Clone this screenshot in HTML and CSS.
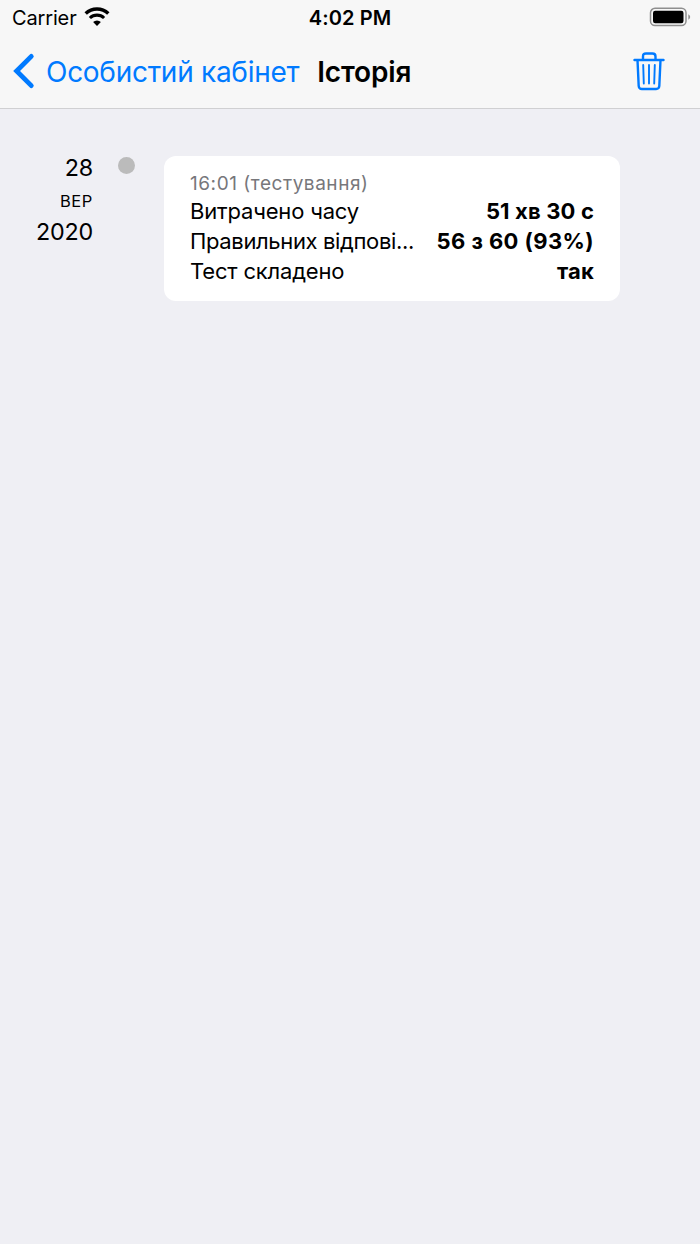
FILE: index.html
```html
<!DOCTYPE html>
<html lang="uk">
<head>
<meta charset="UTF-8">
<meta name="viewport" content="width=device-width, initial-scale=1">
<title>Історія</title>
<link rel="stylesheet" href="styles.css">
</head>
<body>
<div class="app">

<!-- Top bars -->
<header class="top">
<div class="status">
<div class="carrier">
<span class="carrier-name">Carrier</span>
<svg class="wifi" viewBox="0 0 26 20" width="26" height="20">
<path d="M1.700 6.500a16.500 16.500 0 0 1 22.600 0" fill="none" stroke="#000" stroke-width="3.500"/>
<path d="M5.900 11a10.300 10.300 0 0 1 14.200 0" fill="none" stroke="#000" stroke-width="3.100"/>
<path d="M13 19l-3.900-3.900a5.600 5.600 0 0 1 7.800 0z"/>
</svg>
</div>
<div class="time">4:02 PM</div>
<div class="power">
<svg class="battery" viewBox="0 0 42 20" width="42" height="20">
<rect x="1.500" y="1.300" width="35.500" height="17.200" rx="4.500" fill="none" stroke="#8f8f8f" stroke-width="1.500"/>
<rect x="4" y="3.800" width="30.500" height="12.400" rx="2.200"/>
<path d="M39.300 7.200q1.900 1 1.900 2.800t-1.900 2.800z" fill="#8f8f8f"/>
</svg>
</div>
</div>
<nav class="nav">
<a class="back" href="#">
<svg class="chevron" viewBox="0 0 22 36" width="22" height="36">
<path d="M18.300 3.400L3.600 18l14.700 14.600" fill="none" stroke="#007aff" stroke-width="4.800" stroke-linecap="round"/>
</svg>
<span class="back-text">Особистий кабінет</span>
</a>
<h1 class="title">Історія</h1>
<button class="trash" aria-label="Видалити">
<svg viewBox="0 0 32 40" width="32" height="40" fill="none" stroke="#007aff" stroke-width="2.400" stroke-linecap="round" stroke-linejoin="round">
<path d="M1.500 9h29M10 9V5.500q0-3 3-3h6.500q3 0 3 3V9M4.500 9l1.200 26q.2 3 3.200 3h14.200q3 0 3.200-3L27.500 9"/>
<path d="M10.200 14l.6 18.500M16 14v18.500M21.800 14l-.6 18.500" stroke-width="1.900"/>
</svg>
</button>
</nav>
</header>

<!-- Timeline -->
<main class="timeline">
<div class="date">
<div class="day">28</div>
<div class="month">ВЕР</div>
<div class="year">2020</div>
</div>
<span class="dot"></span>
<section class="card">
<div class="card-time">16:01 (тестування)</div>
<div class="row"><span class="label">Витрачено часу</span><b class="value">51 хв 30 с</b></div>
<div class="row"><span class="label long">Правильних відпові...</span><b class="value wide">56 з 60 (93%)</b></div>
<div class="row"><span class="label">Тест складено</span><b class="value">так</b></div>
</section>
</main>

</div>
</body>
</html>
```

FILE: styles.css
```css
*{margin:0;padding:0;box-sizing:border-box;}
body{background:#efeff4;color:#000;font-family:Inter,"Liberation Sans",sans-serif;}
.app{min-height:100vh;}

/* Top bars */
.top{height:109px;background:#f7f7f7;border-bottom:1px solid #d0d0d2;}
.status{display:grid;grid-template-columns:1fr auto 1fr;align-items:center;height:36px;padding:0 9px 0 12px;}
.carrier{display:flex;align-items:center;gap:7px;}
.carrier-name{font-size:20px;letter-spacing:-.15px;}
.wifi{margin-top:-2px;}
.time{padding-right:3px;font-size:20px;font-weight:600;letter-spacing:.1px;}
.power{display:flex;justify-content:flex-end;}
.battery{margin-top:-2px;}
.wifi,.battery,.chevron,.trash svg{display:block;}
.nav{display:flex;align-items:center;height:70px;padding:0 35px 0 13px;}
.back{display:flex;align-items:center;gap:11px;color:#007aff;text-decoration:none;}
.back-text{font-size:28px;letter-spacing:-.28px;white-space:nowrap;}
.title{margin-left:18px;font-size:28px;font-weight:600;letter-spacing:-.15px;white-space:nowrap;}
.back-text,.title{padding-top:1px;}
.trash{margin-left:auto;background:none;border:none;}

/* Timeline */
.timeline{display:flex;align-items:flex-start;padding:47px 80px 0 0;}
.date{width:93px;text-align:right;}
.day,.year{font-size:23.3px;line-height:24px;letter-spacing:-.2px;}
.month{font-size:16.5px;line-height:38px;letter-spacing:.6px;padding-top:2px;}
.dot{flex:none;width:17px;height:17px;margin:1px 29px 0 25px;border-radius:50%;background:#bbb;}
.card{flex:1;min-width:0;height:145px;padding:15px 26px 0;border-radius:12px;background:#fff;}
.card-time{font-size:19px;line-height:25px;letter-spacing:.55px;color:#77777b;}
.row{display:flex;justify-content:space-between;font-size:22px;line-height:30.2px;}
.label{letter-spacing:-.18px;white-space:nowrap;}
.label.long{letter-spacing:-.36px;}
.value{font-weight:700;letter-spacing:.15px;white-space:nowrap;}
.value.wide{letter-spacing:.42px;}
```
